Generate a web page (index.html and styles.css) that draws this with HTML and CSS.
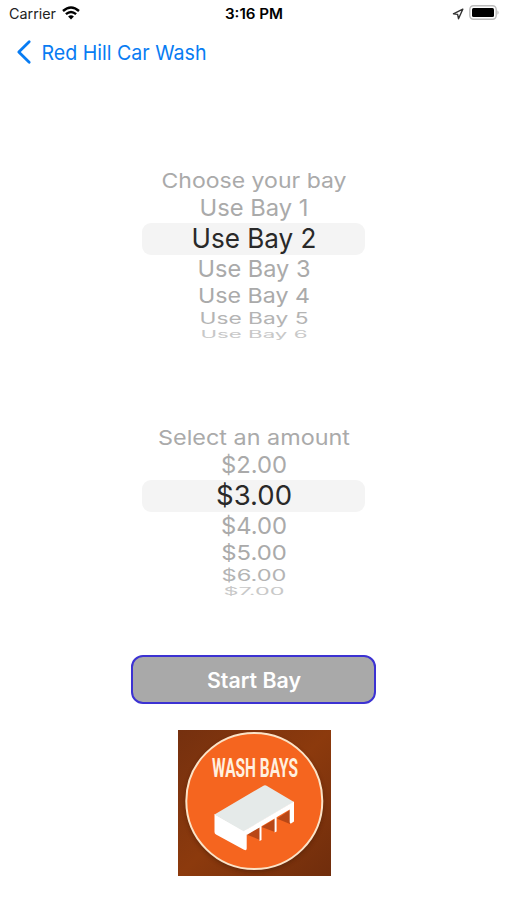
FILE: index.html
```
<!DOCTYPE html>
<html lang="en">
<head>
<meta charset="utf-8">
<title>Red Hill Car Wash</title>
<link rel="stylesheet" href="styles.css">
</head>
<body>
<header class="status">
  <div class="carrier"><svg width="47" height="18"><text x="0" y="14" textLength="47" lengthAdjust="spacingAndGlyphs">Carrier</text></svg>
    <svg class="wifi" width="18" height="14" viewBox="0 0 18 14"><g fill="none" stroke="#000" stroke-width="2.4"><path d="M1 5Q9-2.2 17 5"/><path d="M3.9 8.2Q9 3.6 14.1 8.2"/></g><path d="M6.1 10.4Q9 8 11.9 10.4L9 13.6Z"/></svg>
  </div>
  <svg class="time" width="58" height="18"><text x="-1" y="14" textLength="58" lengthAdjust="spacingAndGlyphs">3:16 PM</text></svg>
  <div class="indicators">
    <svg width="12" height="12" viewBox="0 0 12 12"><path d="M10.8 1.2 1.4 5.8 5.6 6.4 6.5 10.7Z" fill="none" stroke="#333" stroke-width="1.4" stroke-linejoin="round"/></svg>
    <svg width="31" height="16" viewBox="0 0 31 16"><rect x=".8" y=".8" width="26.4" height="13.4" rx="3.6" fill="#fff" stroke="#bcbcbc" stroke-width="1.4"/><rect x="3" y="3" width="22" height="9" rx="1.5"/><path d="M28.4 5.2Q31 7.5 28.4 9.8Z" fill="#bcbcbc"/></svg>
  </div>
</header>
<nav class="nav">
  <svg width="16" height="24" viewBox="0 0 16 24"><path d="M13.2 1.8 2.8 12 13.2 22.2" fill="none" stroke="#087cf3" stroke-width="2.8" stroke-linecap="round" stroke-linejoin="round"/></svg>
  <svg width="176" height="36"><text x="0.5" y="25.5" textLength="165" lengthAdjust="spacingAndGlyphs">Red Hill Car Wash</text></svg>
</nav>
<main>
  <section class="picker">
    <div class="row r1"><svg width="224" height="27"><text x="112" y="20" textLength="185" lengthAdjust="spacingAndGlyphs">Choose your bay</text></svg></div>
    <div class="row r2"><svg width="224" height="28"><text x="112" y="21" textLength="109" lengthAdjust="spacingAndGlyphs">Use Bay 1</text></svg></div>
    <div class="row r3"><svg width="224" height="32"><text x="112" y="25" textLength="125" lengthAdjust="spacingAndGlyphs">Use Bay 2</text></svg></div>
    <div class="row r4"><svg width="224" height="29"><text x="112" y="22" textLength="113" lengthAdjust="spacingAndGlyphs">Use Bay 3</text></svg></div>
    <div class="row r5"><svg width="224" height="25"><text x="112" y="19" textLength="112" lengthAdjust="spacingAndGlyphs">Use Bay 4</text></svg></div>
    <div class="row r6"><svg width="224" height="20"><text x="56" y="0" textLength="54.5" lengthAdjust="spacingAndGlyphs" transform="translate(0 15) scale(2 1)">Use Bay 5</text></svg></div>
    <div class="row r7"><svg width="224" height="12"><text x="56" y="0" textLength="53.5" lengthAdjust="spacingAndGlyphs" transform="translate(0 9) scale(2 1)">Use Bay 6</text></svg></div>
  </section>
  <section class="picker">
    <div class="row r1"><svg width="224" height="27"><text x="112" y="20" textLength="192" lengthAdjust="spacingAndGlyphs">Select an amount</text></svg></div>
    <div class="row r2"><svg width="224" height="28"><text x="112" y="21" textLength="66" lengthAdjust="spacingAndGlyphs">$2.00</text></svg></div>
    <div class="row r3"><svg width="224" height="32"><text x="112" y="25" textLength="76" lengthAdjust="spacingAndGlyphs">$3.00</text></svg></div>
    <div class="row r4"><svg width="224" height="29"><text x="112" y="22" textLength="66" lengthAdjust="spacingAndGlyphs">$4.00</text></svg></div>
    <div class="row r5"><svg width="224" height="25"><text x="112" y="19" textLength="65.5" lengthAdjust="spacingAndGlyphs">$5.00</text></svg></div>
    <div class="row r6"><svg width="224" height="20"><text x="56" y="0" textLength="32.5" lengthAdjust="spacingAndGlyphs" transform="translate(0 15) scale(2 1)">$6.00</text></svg></div>
    <div class="row r7"><svg width="224" height="12"><text x="56" y="0" textLength="30.5" lengthAdjust="spacingAndGlyphs" transform="translate(0 9) scale(2 1)">$7.00</text></svg></div>
  </section>
  <button class="start"><svg width="96" height="30"><text x="48" y="22.6" textLength="94" lengthAdjust="spacingAndGlyphs">Start Bay</text></svg></button>
  <svg class="logo" width="153" height="146" viewBox="0 0 153 146">
    <defs>
      <linearGradient id="rust" x2="1" y2="1"><stop stop-color="#75300f"/><stop offset=".5" stop-color="#8c3a0d"/><stop offset="1" stop-color="#702d0c"/></linearGradient>
      <filter id="soft"><feGaussianBlur stdDeviation="2"/></filter>
    </defs>
    <rect width="153" height="146" fill="url(#rust)"/>
    <circle cx="76.3" cy="73" r="69" fill="#431a08" opacity=".5" filter="url(#soft)"/>
    <circle cx="76.3" cy="71" r="68" fill="#f5651f" stroke="#fbe3c7" stroke-width="2"/>
    <text class="logo-text" transform="translate(34 46.5) scale(1 1.5)" textLength="86" lengthAdjust="spacingAndGlyphs">WASH BAYS</text>
    <path d="M68.5 104.5 82 96V110ZM83.5 97 97 89V102L83.5 97ZM98.5 89 112 80V94L98.5 88.5Z" fill="#b84716"/>
    <path d="M36.5 84 66 100.5 68.7 99V118.5Q68.7 121 66 119.8L38 104.5Q36.5 103.5 36.5 102Z" fill="#fff"/>
    <path d="M36.5 84.5 85 56Q87 54.7 89 56L116 72 66 101.5Z" fill="#e5eae9"/>
    <path d="M66 101 116 71.5V91.5L113 93.5Q111.7 93.5 111.7 92V79.5L98.6 87.3V101.5L96.6 102.5V88.5L83.5 96.3V110L81.5 111V97.5L68.7 105Z" fill="#fff"/>
  </svg>
</main>
</body>
</html>
```
FILE: styles.css
```
* { box-sizing: border-box; }
body { margin: 0; width: 507px; height: 900px; overflow: hidden; background: #fff; font-family: Inter, "Liberation Sans", sans-serif; }
svg { display: block; flex: none; overflow: visible; }
.status { height: 27px; display: grid; grid-template-columns: 1fr 58px 1fr; padding: 5px 7px 0 9px; font-size: 14px; }
.carrier { display: flex; gap: 6px; fill: #222; }
.wifi { margin-top: 1px; fill: #000; }
.time { font-weight: 600; }
.indicators { display: flex; justify-content: flex-end; gap: 5px; padding: 0; }
.indicators svg:first-child { margin-top: 3px; }
.nav { height: 50px; display: flex; align-items: center; gap: 9px; padding-left: 16px; font-size: 20.5px; }
.nav text { fill: #087cf3; }
main { display: flex; flex-direction: column; align-items: center; padding-top: 91px; }
.picker { width: 223px; margin-bottom: 84px; }
.row { text-anchor: middle; fill: #aaa; }
.r1 { height: 27px; font-size: 20.5px; }
.r2 { height: 28px; font-size: 23.5px; }
.r3 { height: 32px; font-size: 27.5px; fill: #292929; background: #f4f4f4; border-radius: 9px; }
.r4 { height: 29px; font-size: 23.5px; }
.r5 { height: 25px; font-size: 20.5px; }
.r6 { height: 20px; font-size: 15.5px; fill: #b4b4b4; }
.r7 { height: 12px; font-size: 10px; fill: #c8c8c8; }
.start { width: 245px; height: 49px; margin: -27px 0 26px; padding: 0; display: grid; place-items: center; border: 2px solid #3c32d2; border-radius: 12px; background: #a9a9a9; font: 600 21px Inter, sans-serif; text-anchor: middle; }
.start text { fill: #fff; }
.logo { margin-left: 1px; overflow: hidden; }
.logo-text { font: 700 17px Roboto, sans-serif; fill: #fff0df; }
```
